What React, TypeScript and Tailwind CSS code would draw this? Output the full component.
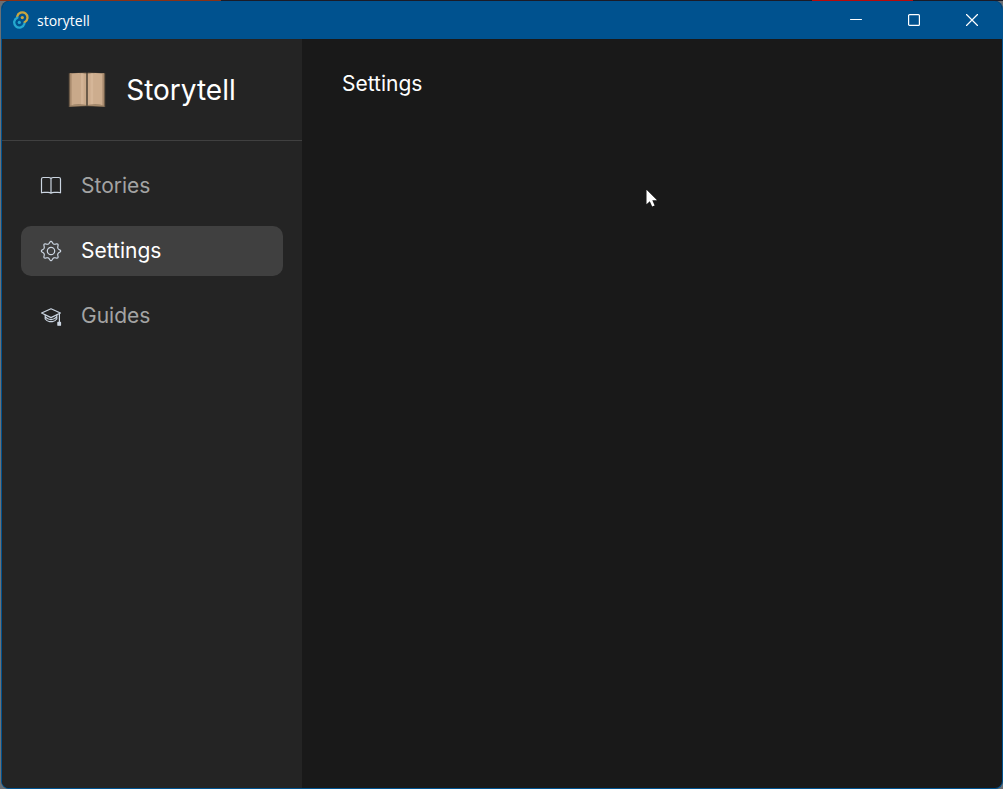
import React from "react";

const stroke = {
  fill: "none",
  stroke: "currentColor",
  strokeLinecap: "round" as const,
  strokeLinejoin: "round" as const,
};

function AppMark() {
  return (
    <svg viewBox="0 0 18 18" className="size-[18px]" aria-hidden="true">
      <g fill="none" strokeWidth="2.3" strokeLinecap="round">
        <path d="M5.2 5.4A5.2 5.2 0 1 1 12.6 11.2" stroke="#c9a63f" />
        <path d="M5.4 6.6A5.2 5.2 0 1 0 12.4 12.8" stroke="#24a9d0" />
      </g>
      <circle cx="10.3" cy="6.6" r="1.6" fill="#c9a63f" />
      <circle cx="7.3" cy="11.4" r="1.6" fill="#24a9d0" />
    </svg>
  );
}

function BookLogo() {
  return (
    <svg viewBox="0 0 38 36" className="h-9 w-[38px]" aria-hidden="true">
      <path d="M.8 1.2 18 .6 19 1.2 20 .6 37.2 1.2V35L20 34.2H18L.8 35Z" fill="#6e5c49" />
      <path d="M2 1.6Q11 .2 18.4 1.6V33Q10 31.8 2 33.2Z" fill="#c9a98a" />
      <path d="M19.6 1.6Q27 .2 36 1.6V33.2Q28 31.8 19.6 33Z" fill="#cdad8e" />
      <path d="M13 1.2h2.6v31H13zM22.6 1.2h2.6v31h-2.6z" fill="#dbbd9e" opacity=".6" />
      <path d="M2 1.6h1.6v31.4H2zM34.4 1.6H36v31.6h-1.6z" fill="#a98b6e" />
      <path d="M2 33.2Q10 31.8 18.4 33H19.6Q28 31.8 36 33.2V34.4L20 33.8H18L2 34.4Z" fill="#a58a6c" />
      <path d="M19 1v33" stroke="#51463a" strokeWidth="1.2" />
    </svg>
  );
}

function StoriesIcon() {
  return (
    <svg viewBox="0 0 22 22" className="size-[22px]" aria-hidden="true" {...stroke} strokeWidth="1.2">
      <path d="M11 3.5Q10 2.6 8.6 2.5H3.2Q1.5 2.6 1.5 4V17.8Q2.4 17.3 4 17.3H8Q10 17.3 11 18.2Q12 17.3 14 17.3H18Q19.6 17.3 20.5 17.8V4Q20.5 2.6 18.8 2.5H13.4Q12 2.6 11 3.5ZM11 3.5V18.2" />
    </svg>
  );
}

// Outline of a gear with eight rounded teeth, the first one pointing up.
const gearOutline =
  Array.from({ length: 160 }, (_, i) => {
    const angle = (i / 160) * Math.PI * 2;
    const radius = 8.4 + 1.1 * Math.cos(8 * angle) + 0.15 * Math.cos(16 * angle);
    const x = 11 + radius * Math.sin(angle);
    const y = 11 - radius * Math.cos(angle);
    return `${i === 0 ? "M" : "L"}${x.toFixed(2)} ${y.toFixed(2)}`;
  }).join("") + "Z";

function SettingsIcon() {
  return (
    <svg viewBox="0 0 22 22" className="size-[22px]" aria-hidden="true" {...stroke} strokeWidth="1.2">
      <circle cx="11" cy="11" r="3.7" />
      <path d={gearOutline} />
    </svg>
  );
}

function GuidesIcon() {
  return (
    <svg viewBox="0 0 22 22" className="size-[22px]" aria-hidden="true" {...stroke} strokeWidth="1.2">
      <path d="M11 3.8 20.4 8 11 12.6 1.6 8Z" />
      <path d="M5.2 10V14Q8 17.5 11 16.4Q14 17.5 16.8 14V10M5.4 11.8Q8 15 11 14.4Q14 15 16.6 11.8M19.4 8.8V17" />
      <path d="M17.9 17.4h2.6v2.8h-2.6z" fill="currentColor" />
    </svg>
  );
}

const items = [
  { label: "Stories", Icon: StoriesIcon },
  { label: "Settings", Icon: SettingsIcon, active: true },
  { label: "Guides", Icon: GuidesIcon },
];

const captionButton = "flex h-full w-[58px] items-center justify-center";

export default function App() {
  return (
    <div className="flex min-h-screen flex-col bg-[#6b7075] font-[Inter,sans-serif] text-white">
      <div className="h-px bg-[linear-gradient(to_right,#8a3216_22%,#1b1b27_22%_81%,#b90a0a_81%_91%,#1b1b27_91%)]" />
      <div className="relative ml-px flex grow flex-col overflow-hidden rounded-lg border-x border-b border-[#00528f] bg-[#191919]">
        <header className="flex h-[38px] items-center bg-[#00528f] pr-px pl-2.5">
          <AppMark />
          <span className="ml-[7px] pt-px font-['Open_Sans',sans-serif] text-sm">storytell</span>
          <div className="ml-auto flex h-full">
            <button className={captionButton} aria-label="Minimize">
              <svg viewBox="0 0 12 12" className="size-3" {...stroke}><path d="M.5 5.5h11" /></svg>
            </button>
            <button className={captionButton} aria-label="Maximize">
              <svg viewBox="0 0 12 12" className="size-3" {...stroke} strokeWidth="1.2"><rect x=".6" y=".6" width="10.8" height="10.8" rx="1" /></svg>
            </button>
            <button className={captionButton} aria-label="Close">
              <svg viewBox="0 0 12 12" className="size-3" {...stroke} strokeWidth="1.2"><path d="m.5.5 11 11m0-11-11 11" /></svg>
            </button>
          </div>
        </header>

        <div className="flex grow">
          <aside className="w-[300px] shrink-0 bg-[#242424]">
            <div className="flex h-[102px] items-center justify-center gap-5 border-b border-[#404040]">
              <BookLogo />
              <span className="text-[28px]">Storytell</span>
            </div>
            <nav className="flex flex-col gap-[15px] px-[19px] py-5">
              {items.map(({ label, Icon, active }) => (
                <a
                  key={label}
                  href="#"
                  aria-current={active ? "page" : undefined}
                  className={
                    active
                      ? "flex h-[50px] items-center gap-[19px] rounded-[10px] bg-[#404040] px-[19px] text-[21px] text-white"
                      : "flex h-[50px] items-center gap-[19px] rounded-[10px] px-[19px] text-[21px] text-[#a3a3a3]"
                  }
                >
                  <span className="text-[#cbd5e1]"><Icon /></span>
                  {label}
                </a>
              ))}
            </nav>
          </aside>
          <main className="grow px-10 py-[29px]">
            <h1 className="text-[21px]">Settings</h1>
          </main>
        </div>

        <svg viewBox="0 0 12 19" className="absolute top-[188px] left-[644px] h-[19px] w-3" aria-hidden="true">
          <path d="M.5.8V15.2L3.8 12.2 6.2 17.6 8.6 16.5 6.3 11.3H11Z" fill="#fff" />
        </svg>
      </div>
    </div>
  );
}
